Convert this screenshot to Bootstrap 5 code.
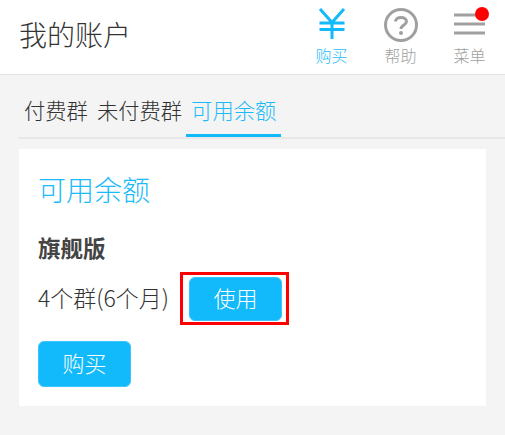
<!DOCTYPE html>
<html lang="zh-CN">
<head>
  <meta charset="UTF-8">
  <title>我的账户</title>
  <meta name="viewport" content="width=device-width, initial-scale=1">
  <link href="https://cdn.jsdelivr.net/npm/bootstrap@5.3.3/dist/css/bootstrap.min.css" rel="stylesheet">
  <style>
    body {
      background: #f4f4f4;
      color: #333;
      font-family: "Noto Sans CJK SC", "Noto Sans", sans-serif;
      height: 435px;
      overflow: hidden;
    }
    .top-bar {
      height: 75px;
      background: #fff;
      border-bottom: 1px solid #e0e0e0;
      padding-left: 19px;
      padding-right: 1px;
    }
    .top-title { font-size: 28px; line-height: 34px; color: #333; font-weight: 300; margin-top: -7px; }
    .top-item {
      width: 69px;
      height: 74px;
      color: #a0a0a0;
      font-size: 16px;
      line-height: 20px;
      position: relative;
      font-weight: 300;
    }
    .top-item svg { display: block; width: 40px; height: 40px; margin-top: 5px; }
    .item-active { color: #26bdfa; }
    .red-dot {
      position: absolute;
      top: 7px;
      right: 15px;
      width: 14px;
      height: 14px;
      background: #fe0000;
      border-radius: 50%;
    }
    .tab-row {
      margin: 16px 0 0 18px;
      height: 48px;
      border-bottom: 2px solid #e8e8e8;
    }
    .tab-link {
      font-size: 21.3px;
      line-height: 28px;
      padding: 5px 3px 11px 6px;
      color: #333;
      height: 46px;
      font-weight: 300;
    }
    .tab-on { color: #1cbafa; border-bottom: 3px solid #12b9fb; padding: 5px 5px 8px 5px; margin-left: 1px; }
    .panel {
      margin: 10px 19px 0 19px;
      height: 257px;
      background: #fff;
      padding: 20px 19px;
    }
    .panel-title { font-size: 28px; line-height: 40px; color: #1cbafa; margin-bottom: 22px; font-weight: 300; }
    .plan-name { font-size: 22.5px; line-height: 32px; font-weight: 700; color: #444; margin-bottom: 9px; }
    .plan-text { font-size: 23px; line-height: 30px; color: #333; font-weight: 300; padding-bottom: 4px; }
    .mark-box { border: 3px solid #f00; padding: 2px 4px 1px 6px; margin-left: 11px; }
    .sky-btn {
      background: #12b9fb;
      border: 1px solid #3cc5fb;
      color: #fff;
      border-radius: 6px;
      width: 93px;
      font-size: 22px;
      line-height: 28px;
      padding: 0 0 5px;
      font-weight: 300;
    }
    .use-btn { height: 44px; display: block; }
    .buy-btn { height: 46px; margin-top: 16px; display: block; }
  </style>
</head>
<body>

  <div class="top-bar d-flex align-items-center justify-content-between">
    <div class="top-title">我的账户</div>
    <div class="d-flex">
      <div class="top-item item-active d-flex flex-column align-items-center">
        <svg viewBox="0 0 40 40" fill="none" stroke="#12b9fb" stroke-width="3">
          <path d="M8 4 L20 17.500 L32 4 M7.500 18 H32.500 M7.500 24.500 H32.500 M20 17 V34"/>
        </svg>
        <span>购买</span>
      </div>
      <div class="top-item d-flex flex-column align-items-center">
        <svg viewBox="0 0 40 40" fill="none" stroke="#a0a0a0">
          <circle cx="20" cy="20" r="15.500" stroke-width="3"/>
          <path d="M14.500 16.500 C14.500 11 25.500 11 25.500 16.500 C25.500 20 20 20 20 24" stroke-width="3"/>
          <circle cx="20" cy="28" r="2" fill="#a0a0a0" stroke="none"/>
        </svg>
        <span>帮助</span>
      </div>
      <div class="top-item d-flex flex-column align-items-center">
        <svg viewBox="0 0 40 40" fill="none" stroke="#a0a0a0" stroke-width="3">
          <path d="M4 10 H35 M4 19 H35 M4 28 H35"/>
        </svg>
        <span>菜单</span>
        <div class="red-dot"></div>
      </div>
    </div>
  </div>

  <div class="tab-row d-flex">
    <div class="tab-link">付费群</div>
    <div class="tab-link">未付费群</div>
    <div class="tab-link tab-on">可用余额</div>
  </div>

  <div class="panel">
    <div class="panel-title">可用余额</div>
    <div class="plan-name">旗舰版</div>
    <div class="d-flex align-items-center">
      <div class="plan-text">4个群(6个月)</div>
      <div class="mark-box"><button class="btn sky-btn use-btn">使用</button></div>
    </div>
    <button class="btn sky-btn buy-btn">购买</button>
  </div>

  <script src="https://cdn.jsdelivr.net/npm/bootstrap@5.3.3/dist/js/bootstrap.bundle.min.js"></script>
</body>
</html>
